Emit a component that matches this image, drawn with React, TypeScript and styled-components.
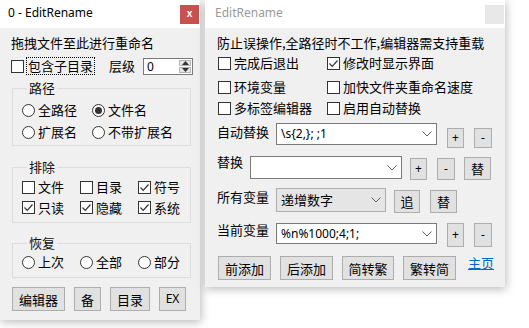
import { Fragment } from "react";
import styled, { createGlobalStyle } from "styled-components";

const GlobalStyle = createGlobalStyle`
  * {
    box-sizing: border-box;
  }
  body {
    margin: 0;
    background: #fff;
    font-family: "Noto Sans CJK SC", "Noto Sans", sans-serif;
    font-size: 13px;
    color: #000;
  }
`;

const Desktop = styled.div`
  position: relative;
  width: 529px;
  height: 328px;
  overflow: hidden;
  background: #fff;
`;

const Window = styled.div<{ $left: number; $width: number; $height: number }>`
  position: absolute;
  top: 0;
  left: ${(p) => p.$left}px;
  width: ${(p) => p.$width}px;
  height: ${(p) => p.$height}px;
  display: flex;
  flex-direction: column;
  background: #f0f0f0;
  box-shadow: 1px 2px 9px rgba(0, 0, 0, 0.28);
`;

const TitleBar = styled.div<{ $padLeft: number }>`
  height: 28px;
  flex: none;
  display: flex;
  align-items: flex-start;
  justify-content: space-between;
  padding: 0 1px 0 ${(p) => p.$padLeft}px;
  background: #fff;
`;

const Title = styled.span<{ $active?: boolean }>`
  font-family: "Noto Sans", "Open Sans", sans-serif;
  font-size: 12px;
  line-height: 26px;
  color: ${(p) => (p.$active ? "#000" : "#9a9a9a")};
`;

const CloseButton = styled.div<{ $active?: boolean }>`
  margin-top: 5px;
  width: 19px;
  height: 19px;
  background: ${(p) => (p.$active ? "#c75050" : "#e8e8e8")};
  color: #fff;
  font: bold 10px/18px "Liberation Sans", Arial, sans-serif;
  text-align: center;
`;

const Body = styled.div<{ $padLeft: number }>`
  display: flex;
  flex-direction: column;
  padding: 7px 0 0 ${(p) => p.$padLeft}px;
`;

const Line = styled.div`
  height: 16px;
  line-height: 16px;
  white-space: nowrap;
`;

const Row = styled.div<{ $top: number; $height: number }>`
  display: flex;
  align-items: center;
  margin-top: ${(p) => p.$top}px;
  height: ${(p) => p.$height}px;
  white-space: nowrap;
`;

const FormRow = styled.div<{ $top: number; $height: number }>`
  display: flex;
  align-items: flex-start;
  margin-top: ${(p) => p.$top}px;
  height: ${(p) => p.$height}px;
  white-space: nowrap;
`;

const Label = styled.span<{ $w?: number; $ml?: number; $dy?: number }>`
  width: ${(p) => (p.$w ? `${p.$w}px` : "auto")};
  flex: none;
  margin-left: ${(p) => p.$ml ?? 0}px;
  margin-top: ${(p) => p.$dy ?? 0}px;
  line-height: 16px;
`;

const Option = styled.label`
  display: inline-flex;
  align-items: center;
  gap: 3px;
  line-height: 16px;
  white-space: nowrap;
`;

const Box = styled.span<{ $round?: boolean }>`
  width: 13px;
  height: 13px;
  flex: none;
  display: inline-flex;
  align-items: center;
  justify-content: center;
  border: 1px solid #333;
  border-radius: ${(p) => (p.$round ? "50%" : "0")};
  background: #fff;
`;

const Dot = styled.span`
  width: 7px;
  height: 7px;
  border-radius: 50%;
  background: #333;
`;

const Focus = styled.span`
  outline: 1px dotted #000;
  outline-offset: 0;
  padding: 0 1px;
`;

const Group = styled.fieldset<{ $top: number; $height: number }>`
  margin: ${(p) => p.$top}px 0 0 1px;
  padding: 0 0 0 9px;
  width: 179px;
  height: ${(p) => p.$height}px;
  min-width: 0;
  border: 1px solid #dcdcdc;
`;

const Legend = styled.legend`
  margin-left: 5px;
  padding: 0 2px;
  line-height: 16px;
  font-size: 13px;
  color: #111;
`;

const OptGrid = styled.div<{ $cols: string; $row: number; $pt: number }>`
  display: grid;
  grid-template-columns: ${(p) => p.$cols};
  grid-auto-rows: ${(p) => p.$row}px;
  align-items: center;
  padding-top: ${(p) => p.$pt}px;
`;

const Spin = styled.div`
  display: flex;
  width: 50px;
  height: 17px;
  margin-left: 8px;
  border: 1px solid #7a7a7a;
  background: #fff;
`;

const SpinValue = styled.span`
  flex: 1;
  padding-left: 3px;
  font: 12px/15px "Noto Sans", sans-serif;
`;

const SpinArrows = styled.div`
  width: 13px;
  display: flex;
  flex-direction: column;
  padding: 1px 1px 1px 0;
  gap: 1px;
`;

const SpinArrow = styled.div`
  flex: 1;
  display: flex;
  align-items: center;
  justify-content: center;
  background: #e5e5e5;
  border: 1px solid #b5b5b5;
`;

const Button = styled.button<{ $w: number; $h?: number; $ml?: number; $dy?: number; $small?: boolean }>`
  flex: none;
  width: ${(p) => p.$w}px;
  height: ${(p) => p.$h ?? 24}px;
  margin-left: ${(p) => p.$ml ?? 0}px;
  margin-top: ${(p) => p.$dy ?? 0}px;
  padding: 0;
  background: #e1e1e1;
  border: 1px solid #adadad;
  color: #000;
  font-family: ${(p) => (p.$small ? '"Noto Sans", sans-serif' : "inherit")};
  font-size: ${(p) => (p.$small ? 12 : 13)}px;
  line-height: 1;
`;

const ButtonBar = styled.div<{ $top: number; $pl: number }>`
  display: flex;
  align-items: flex-start;
  gap: 9px;
  margin-top: ${(p) => p.$top}px;
  padding-left: ${(p) => p.$pl}px;
`;

const Combo = styled.div<{ $w: number; $h: number; $ml?: number; $dy?: number; $list?: boolean }>`
  flex: none;
  display: flex;
  align-items: center;
  width: ${(p) => p.$w}px;
  height: ${(p) => p.$h}px;
  margin-left: ${(p) => p.$ml ?? 0}px;
  margin-top: ${(p) => p.$dy ?? 0}px;
  padding-left: 4px;
  border: 1px solid ${(p) => (p.$list ? "#adadad" : "#7a7a7a")};
  background: ${(p) => (p.$list ? "#e5e5e5" : "#fff")};
`;

const ComboText = styled.span<{ $cjk?: boolean }>`
  flex: 1;
  white-space: nowrap;
  font-family: ${(p) => (p.$cjk ? "inherit" : '"Noto Sans", sans-serif')};
  font-size: ${(p) => (p.$cjk ? 13 : 12)}px;
  line-height: 16px;
`;

const ChevronBox = styled.span`
  width: 18px;
  flex: none;
  display: flex;
  justify-content: center;
`;

const HomeLink = styled.a`
  margin-left: 3px;
  margin-top: -1px;
  line-height: 16px;
  color: #0066cc;
  text-decoration: underline;
`;

const SettingsGrid = styled.div`
  display: grid;
  grid-template-columns: 109px auto;
  padding-left: 1px;
`;

const SettingsCell = styled.div<{ $top: number }>`
  height: 20px;
  display: flex;
  align-items: center;
  margin-top: ${(p) => p.$top}px;
`;

function Chevron() {
  return (
    <ChevronBox>
      <svg width="10" height="6" viewBox="0 0 10 6">
        <polyline points="0.5,0.5 5,5 9.5,0.5" fill="none" stroke="#606060" strokeWidth="1" />
      </svg>
    </ChevronBox>
  );
}

function CheckBox({ label, checked, focused }: { label: string; checked?: boolean; focused?: boolean }) {
  return (
    <Option>
      <Box>
        {checked && (
          <svg width="11" height="11" viewBox="0 0 11 11">
            <polyline points="1.5,5.5 4.2,8.3 9.5,2.5" fill="none" stroke="#333" strokeWidth="1.2" />
          </svg>
        )}
      </Box>
      {focused ? <Focus>{label}</Focus> : label}
    </Option>
  );
}

function Radio({ label, checked }: { label: string; checked?: boolean }) {
  return (
    <Option>
      <Box $round>{checked && <Dot />}</Box>
      {label}
    </Option>
  );
}

function Triangle({ up }: { up?: boolean }) {
  return (
    <svg width="7" height="4" viewBox="0 0 7 4">
      <polygon points={up ? "0,4 7,4 3.5,0" : "0,0 7,0 3.5,4"} fill="#333" />
    </svg>
  );
}

function MainWindow() {
  return (
    <Window $left={0} $width={200} $height={320}>
      <TitleBar $padLeft={8}>
        <Title $active>0 - EditRename</Title>
        <CloseButton $active>x</CloseButton>
      </TitleBar>
      <Body $padLeft={11}>
        <Line>拖拽文件至此进行重命名</Line>
        <Row $top={5} $height={20}>
          <CheckBox label="包含子目录" focused />
          <Label $ml={15}>层级</Label>
          <Spin>
            <SpinValue>0</SpinValue>
            <SpinArrows>
              <SpinArrow>
                <Triangle up />
              </SpinArrow>
              <SpinArrow>
                <Triangle />
              </SpinArrow>
            </SpinArrows>
          </Spin>
        </Row>
        <Group $top={4} $height={66}>
          <Legend>路径</Legend>
          <OptGrid $cols="70px auto" $row={22} $pt={3}>
            <Radio label="全路径" />
            <Radio label="文件名" checked />
            <Radio label="扩展名" />
            <Radio label="不带扩展名" />
          </OptGrid>
        </Group>
        <Group $top={13} $height={64}>
          <Legend>排除</Legend>
          <OptGrid $cols="58px 58px auto" $row={20.5} $pt={2}>
            <CheckBox label="文件" />
            <CheckBox label="目录" />
            <CheckBox label="符号" checked />
            <CheckBox label="只读" checked />
            <CheckBox label="隐藏" checked />
            <CheckBox label="系统" checked />
          </OptGrid>
        </Group>
        <Group $top={12} $height={43}>
          <Legend>恢复</Legend>
          <OptGrid $cols="58px 58px auto" $row={20} $pt={1}>
            <Radio label="上次" />
            <Radio label="全部" />
            <Radio label="部分" />
          </OptGrid>
        </Group>
        <ButtonBar $top={9} $pl={1}>
          <Button $w={53}>编辑器</Button>
          <Button $w={27}>备</Button>
          <Button $w={40}>目录</Button>
          <Button $w={27} $small>
            EX
          </Button>
        </ButtonBar>
      </Body>
    </Window>
  );
}

function SettingsWindow() {
  const rows: [string, boolean, string, boolean, number][] = [
    ["完成后退出", false, "修改时显示界面", true, 2],
    ["环境变量", false, "加快文件夹重命名速度", false, 4],
    ["多标签编辑器", false, "启用自动替换", false, 1],
  ];
  return (
    <Window $left={205} $width={300} $height={287}>
      <TitleBar $padLeft={10}>
        <Title>EditRename</Title>
        <CloseButton />
      </TitleBar>
      <Body $padLeft={12}>
        <Line>防止误操作,全路径时不工作,编辑器需支持重载</Line>
        <SettingsGrid>
          {rows.map(([a, ac, b, bc, top]) => (
            <Fragment key={a}>
              <SettingsCell $top={top}>
                <CheckBox label={a} checked={ac} />
              </SettingsCell>
              <SettingsCell $top={top}>
                <CheckBox label={b} checked={bc} />
              </SettingsCell>
            </Fragment>
          ))}
        </SettingsGrid>
        <FormRow $top={5} $height={25}>
          <Label $w={59} $dy={1}>自动替换</Label>
          <Combo $w={161} $h={22}>
            <ComboText>{"\\s{2,}; ;1"}</ComboText>
            <Chevron />
          </Combo>
          <Button $w={17} $h={20} $ml={10} $dy={5} $small>
            +
          </Button>
          <Button $w={18} $h={20} $ml={10} $dy={5} $small>
            -
          </Button>
        </FormRow>
        <FormRow $top={6} $height={26}>
          <Label $w={33}>替换</Label>
          <Combo $w={152} $h={23} $dy={2}>
            <ComboText />
            <Chevron />
          </Combo>
          <Button $w={17} $h={22} $ml={8} $dy={4} $small>
            +
          </Button>
          <Button $w={18} $h={22} $ml={10} $dy={4} $small>
            -
          </Button>
          <Button $w={27} $h={23} $ml={9} $dy={3}>
            替
          </Button>
        </FormRow>
        <FormRow $top={8} $height={26}>
          <Label $w={59} $dy={1}>所有变量</Label>
          <Combo $w={110} $h={24} $list>
            <ComboText $cjk>递增数字</ComboText>
            <Chevron />
          </Combo>
          <Button $w={26} $h={23} $ml={8} $dy={2}>
            追
          </Button>
          <Button $w={27} $h={23} $ml={10} $dy={2}>
            替
          </Button>
        </FormRow>
        <FormRow $top={8} $height={26}>
          <Label $w={59}>当前变量</Label>
          <Combo $w={161} $h={21} $dy={1}>
            <ComboText>%n%1000;4;1;</ComboText>
            <Chevron />
          </Combo>
          <Button $w={17} $h={24} $ml={10} $dy={1} $small>
            +
          </Button>
          <Button $w={18} $h={24} $ml={10} $dy={1} $small>
            -
          </Button>
        </FormRow>
        <ButtonBar $top={8} $pl={1}>
          <Button $w={53}>前添加</Button>
          <Button $w={53}>后添加</Button>
          <Button $w={52}>简转繁</Button>
          <Button $w={53}>繁转简</Button>
          <HomeLink href="#">主页</HomeLink>
        </ButtonBar>
      </Body>
    </Window>
  );
}

export default function App() {
  return (
    <Desktop>
      <GlobalStyle />
      <MainWindow />
      <SettingsWindow />
    </Desktop>
  );
}
